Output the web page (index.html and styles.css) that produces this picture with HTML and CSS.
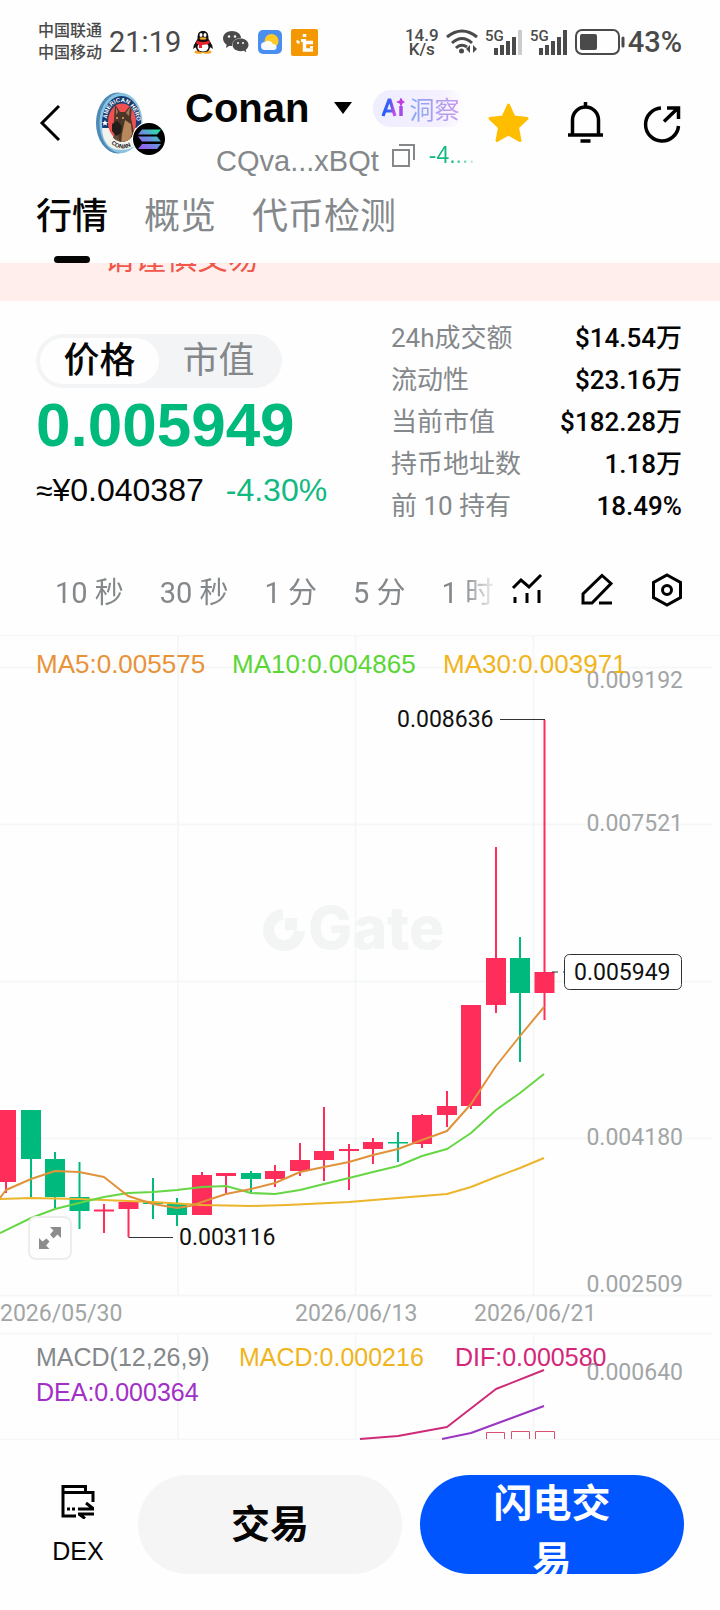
FILE: index.html
```html
<!DOCTYPE html>
<html lang="zh-CN">
<head>
<meta charset="utf-8">
<meta name="viewport" content="width=device-width, initial-scale=1">
<title>Conan 行情</title>
<link rel="stylesheet" href="styles.css">
</head>
<body>
<div class="status-bar">
  <div class="carriers"><span>中国联通</span><span>中国移动</span></div>
  <time class="clock">21:19</time>
  <div class="notices">
    <svg width="22" height="24" viewBox="0 0 22 24" aria-hidden="true">
      <path d="M4 12Q1 15 1 19L4 17M18 12Q21 15 21 19L18 17" fill="#111"/>
      <ellipse cx="7" cy="22" rx="4.500" ry="1.800" fill="#f5a623"/><ellipse cx="15" cy="22" rx="4.500" ry="1.800" fill="#f5a623"/>
      <path d="M5.500 9C5.500 3 7 1 11 1s5.500 2 5.500 8c3 4 3 7 1 10-1 3-3.500 3-6.500 3s-5.500 0-6.500-3c-2-3-2-6 1-10z" fill="#111"/>
      <ellipse cx="11" cy="17" rx="5.500" ry="4.500" fill="#fff"/>
      <path d="M5 10.500q6 3 12 0l1 2.500q-3 2-8 2v3H7v-3l-3-2z" fill="#e8212b"/>
      <ellipse cx="9" cy="5" rx="1.500" ry="2" fill="#fff"/><ellipse cx="13" cy="5" rx="1.500" ry="2" fill="#fff"/>
      <ellipse cx="11" cy="8.500" rx="3.500" ry="1.200" fill="#f5a623"/>
    </svg>
    <svg width="26" height="22" viewBox="0 0 26 22" aria-hidden="true">
      <path d="M9 0c5 0 9 3 9 7-5 0-9 3-9 8l-3 0-3 2 .6-3.200C1.500 12.500 0 10 0 7.500 0 3 4 0 9 0z" fill="#4a4a4a"/>
      <path d="M17.500 7.500c4.500 0 8 2.700 8 6.200 0 2-1 3.700-2.700 5l.5 2.600-2.500-1.500c-7 1.500-11.300-2-11.300-6 0-3.600 3.500-6.300 8-6.300z" fill="#4a4a4a"/>
      <g fill="#fff"><circle cx="6" cy="5.500" r="1.200"/><circle cx="12" cy="5.500" r="1.200"/><circle cx="15" cy="12" r="1"/><circle cx="20" cy="12" r="1"/></g>
    </svg>
    <svg width="24" height="24" viewBox="0 0 24 24" aria-hidden="true">
      <rect width="24" height="24" rx="5" fill="#4a8ff0"/><circle cx="13.500" cy="11" r="7" fill="#ffc926"/>
      <path d="M7 20a4 4 0 0 1 0-8 5 5 0 0 1 8 2 3 3 0 0 1 1 6z" fill="#fff" opacity=".95"/>
    </svg>
    <svg width="27" height="27" viewBox="0 0 27 27" aria-hidden="true">
      <rect width="27" height="27" rx="2" fill="#f39800"/>
      <path d="M13.500 5v3M22 13.500h-8.500V21H22" fill="none" stroke="#fff" stroke-width="3.500"/><path d="M10 10h5v3h-5zM5.500 11l3 1v3l-3-1zM19 17h3v2h-3z" fill="#fff"/>
    </svg>
  </div>
  <div class="speed"><span>14.9</span><span>K/s</span></div>
  <svg width="32" height="26" viewBox="0 0 32 26" aria-hidden="true">
    <g fill="none" stroke="#4a4a4a" stroke-width="3"><path d="M1 8Q16-4 31 8"/><path d="M6 14Q16 5 26 14"/><path d="M10 19q5-5 11-1"/></g>
    <circle cx="15.500" cy="22" r="2.500" fill="#4a4a4a"/><path d="M24 16v8l-4-4zM27 16v8l4-4z" fill="#4a4a4a"/>
  </svg>
  <svg class="signal" width="38" height="26" viewBox="0 0 38 26" role="img" aria-label="5G">
    <text x="0" y="12" class="signal-text">5G</text>
    <path d="M11 19v7M17 16v10M23 12v14M29 8v18" stroke="#4a4a4a" stroke-width="4"/><path d="M35 1v25" stroke="#ccc" stroke-width="4"/>
  </svg>
  <svg class="signal" width="38" height="26" viewBox="0 0 38 26" role="img" aria-label="5G">
    <text x="0" y="12" class="signal-text">5G</text>
    <path d="M11 19v7M17 16v10M23 12v14M29 8v18M35 1v25" stroke="#4a4a4a" stroke-width="4"/>
  </svg>
  <svg width="50" height="26" viewBox="0 0 50 26" aria-hidden="true">
    <rect x="1" y="1" width="43" height="24" rx="6" fill="none" stroke="#4a4a4a" stroke-width="2"/><rect x="5" y="5" width="17" height="16" rx="2" fill="#4a4a4a"/><path d="M48 9v8" stroke="#4a4a4a" stroke-width="3" stroke-linecap="round"/>
  </svg>
  <span class="battery">43%</span>
</div>

<header class="token-header">
  <button class="icon-button" aria-label="返回">
    <svg width="28" height="42" viewBox="0 0 28 42"><path d="M23 4L6 21l17 17" fill="none" stroke="#000" stroke-width="3"/></svg>
  </button>
  <svg class="avatar" width="70" height="64" viewBox="0 0 70 64" role="img" aria-label="Conan">
    <defs>
      <linearGradient id="sol" x1="0" y1="1" x2="1" y2="0"><stop offset="0" stop-color="#a04cf5"/><stop offset=".5" stop-color="#6d8fe0"/><stop offset="1" stop-color="#19f0a0"/></linearGradient>
      <path id="arc-top" d="M11 27C12 16 18 10 25 10s14 6 16 20"/>
      <path id="arc-bottom" d="M13 49Q19 56.500 27 56.500T42 47"/>
      <clipPath id="disc"><ellipse cx="26" cy="31" rx="14" ry="19"/></clipPath>
    </defs>
    <ellipse cx="22" cy="31" rx="22" ry="30.500" fill="#4e8ab5"/>
    <ellipse cx="25" cy="31" rx="21.500" ry="30" fill="#89c3e2"/>
    <ellipse cx="25.500" cy="31" rx="19.500" ry="27" fill="#173a70"/>
    <path d="M6 36q1 22 19.500 22T45 36z" fill="#f3f3ee"/>
    <ellipse cx="26" cy="30" rx="14" ry="18.500" fill="#f05050"/>
    <g clip-path="url(#disc)">
      <path d="M15 50l5-12 14-6 8 18z" fill="#6b4c35"/>
      <path d="M18 28l1-16 5 8h5l7-9-1 15 2 10 3 16H24l-2-11-5-2z" fill="#4a3729"/>
      <path d="M29 28l6 4 1 10-4 10h-7l1-10z" fill="#b8875a"/>
      <path d="M20 15l2 5-2 3zM34 15l-4 6 3 3z" fill="#a77a5c"/>
      <path d="M16 32l5-3 5 5-1 7-5 3-4-5z" fill="#241e1b"/><circle cx="21" cy="26" r="1" fill="#e3a868"/><circle cx="27" cy="26" r="1" fill="#e3a868"/>
    </g>
    <path d="M9 28l1 2h2l-1.500 1.500.5 2-2-1-2 1 .5-2L6 30h2z" fill="#fff"/>
    <text class="coin-text light"><textPath href="#arc-top">AMERICAN HERO</textPath></text>
    <text class="coin-text"><textPath href="#arc-bottom" startOffset="3">CONAN</textPath></text>
    <circle cx="53" cy="47" r="17" fill="#fff"/><circle cx="53" cy="47" r="16" fill="#000"/>
    <path d="M46 37.500h19l-4 5H42zM42 44.500h19l4 5H46zM46 52h19l-4 5H42z" fill="url(#sol)"/>
  </svg>
  <div class="identity">
    <div class="name-row">
      <h1>Conan</h1>
      <svg width="18" height="13" viewBox="0 0 18 13" aria-hidden="true"><path d="M0 0h18L9 12z" fill="#000"/></svg>
      <button class="insight"><svg width="24" height="20" viewBox="0 0 24 20" role="img" aria-label="Ai">
        <defs><linearGradient id="ai"><stop offset="0" stop-color="#1c5eff"/><stop offset=".6" stop-color="#4a60ef"/><stop offset="1" stop-color="#d44be8"/></linearGradient></defs>
        <path d="M2 18L8 2h1l5 16M4 13h8" fill="none" stroke="url(#ai)" stroke-width="3.200"/><path d="M20 8v10" stroke="#a34ae8" stroke-width="3.500"/><path d="M20-1l1.500 3.500L24 4l-2.500 1.500L20 9l-1.500-3.500L15 4l3.500-1.500z" fill="#c23be0"/>
      </svg><span>洞察</span></button>
    </div>
    <div class="address-row">
      <span class="address">CQva...xBQt</span>
      <button class="icon-button" aria-label="复制地址"><svg width="24" height="24" viewBox="0 0 24 24"><path d="M1 7h16v16H1zM7 2h15v15" fill="none" stroke="#84888b" stroke-width="2"/></svg></button>
      <span class="mini-change">-4....</span>
    </div>
  </div>
  <div class="actions">
    <button class="icon-button" aria-label="收藏"><svg width="42" height="42" viewBox="0 0 42 42"><path d="M20.500 3l5.500 12 13 1.500-9.500 9L32 38.500 20.500 32 9 38.500l2.500-13L2 16.500 15 15z" fill="#ffbd00" stroke="#ffbd00" stroke-width="3" stroke-linejoin="round"/></svg></button>
    <button class="icon-button" aria-label="提醒"><svg width="42" height="42" viewBox="0 0 42 42" fill="none" stroke="#000" stroke-width="3.500"><path d="M3 33h35M7.500 33V18a13 13 0 0 1 26 0v15M20.500 6V0M15.500 39h10"/></svg></button>
    <button class="icon-button" aria-label="分享"><svg width="42" height="42" viewBox="0 0 42 42" fill="none" stroke="#000" stroke-width="3.500"><path d="M19 6A16.500 16.500 0 1 0 36.500 24M22 19.500L36 6M25 6h11.500v11"/></svg></button>
  </div>
</header>

<nav class="tabs">
  <a href="#market" class="active" aria-current="page">行情</a>
  <a href="#overview">概览</a>
  <a href="#security">代币检测</a>
</nav>

<main id="market">
  <div class="warning"><p>请谨慎交易</p></div>

  <section class="summary">
    <div class="quote">
      <div class="switch"><button class="selected" aria-pressed="true">价格</button><button aria-pressed="false">市值</button></div>
      <strong class="price">0.005949</strong>
      <p class="converted"><span><span class="approx">≈</span>¥0.040387</span><span class="up">-4.30%</span></p>
    </div>
    <dl class="stats">
      <div><dt>24h成交额</dt><dd>$14.54万</dd></div>
      <div><dt>流动性</dt><dd>$23.16万</dd></div>
      <div><dt>当前市值</dt><dd>$182.28万</dd></div>
      <div><dt>持币地址数</dt><dd>1.18万</dd></div>
      <div><dt>前 10 持有</dt><dd>18.49%</dd></div>
    </dl>
  </section>

  <div class="toolbar">
    <div class="intervals">
      <button>10 秒</button><button>30 秒</button><button>1 分</button><button>5 分</button><button>1 时</button>
    </div>
    <div class="tools">
      <button class="icon-button" aria-label="指标"><svg width="34" height="34" viewBox="0 0 34 34" fill="none" stroke="#000" stroke-width="3"><path d="M3 15l8-8 8 7L31 2M5 24v6M17 20v10M29 17v13"/></svg></button>
      <button class="icon-button" aria-label="画线"><svg width="34" height="34" viewBox="0 0 34 34" fill="none" stroke="#000" stroke-width="3"><path d="M3 30v-9L22 2.500l9 8L12 30zM19 30h13"/></svg></button>
      <button class="icon-button" aria-label="设置"><svg width="34" height="34" viewBox="0 0 34 34" fill="none" stroke="#000" stroke-width="3"><path d="M17 2l13.500 7.500v15L17 32 3.500 24.500v-15z"/><circle cx="17" cy="17" r="4.500"/></svg></button>
    </div>
  </div>

  <div class="chart-wrap">
    <svg class="chart" viewBox="0 635 720 805" role="img" aria-label="K 线图">
      <g class="grid"><path d="M0 635.500H720M0 667.500H712M0 824.500H712M0 981.500H712M0 1138.500H712M0 1295.500H712M0 1333.500H712M0 1439.500H720M178 635V1295M355.500 635V1295M533.500 635V1295M178 1333V1440M355.500 1333V1440M533.500 1333V1440"/></g>
      <g class="watermark">
        <path d="M283 914.500A15.500 15.500 0 1 0 299.500 931" class="mark-ring"/><path d="M285 918h12v12h-12z" class="mark-dot"/>
        <text x="308" y="949">Gate</text>
      </g>
      <g class="wick red"><path d="M6 1182V1193M104 1204V1233M128.500 1209V1237M202 1172V1215M226 1176V1193M275 1165V1187M300 1143V1176M324 1107V1181M349 1144V1190M373 1138V1164M422 1114V1148M447 1091V1127M471 1105V1109M496 847V1013M544.500 720V1020"/></g>
      <g class="wick green"><path d="M31 1159V1197M55 1152V1208M79.500 1162V1229M153 1178V1219M177 1198V1226M251 1171V1194M398 1132V1162M520 937V1062"/></g>
      <g class="body red">
        <path d="M6 1110V1182M104 1209.500V1211.500M128.500 1202V1209M202 1175V1215M226 1173V1176M275 1171V1179M300 1160V1171M324 1151V1160M349 1149V1151M373 1142V1149M422 1115V1144M447 1106V1115M471 1005V1106M496 958V1005M544.500 972V993"/>
      </g>
      <g class="body green"><path d="M31 1110V1159M55 1159V1197M79.500 1197V1211M153 1202.500V1204M177 1204V1215M251 1173V1179M398 1142V1143.500M520 958V993"/></g>
      <polyline class="line ma30" points="0,1199 31,1198 79,1199 128,1201 153,1202 202,1205 251,1206 287,1205 349,1202 398,1198 447,1194 471,1187 496,1177 520,1168 544,1158"/>
      <polyline class="line ma10" points="0,1233 31,1218 55,1209 79,1203 104,1197 128,1193 153,1192 177,1190 202,1187 226,1186 251,1193 275,1194 300,1190 324,1184 349,1178 373,1172 398,1166 422,1156 447,1149 471,1133 496,1110 520,1093 544,1074"/>
      <polyline class="line ma5" points="0,1198 6,1190 31,1179 55,1171 79,1172 104,1177 128,1196 153,1204 177,1208 190,1206 226,1194 251,1189 275,1183 300,1172 324,1167 349,1162 373,1155 398,1149 422,1140 447,1131 471,1104 496,1066 520,1036 544,1007"/>
      <path class="pointer" d="M500 719.500H545M128.500 1237.500H173"/><path class="pointer" stroke-dasharray="6 5" d="M552 972H565"/>
      <text class="num" x="397" y="727">0.008636</text>
      <text class="num" x="179" y="1245">0.003116</text>
      <rect class="tag" x="564.500" y="954.500" width="117" height="35" rx="5"/>
      <text class="num" x="574" y="980">0.005949</text>
      <g class="num axis"><text x="683" y="688" text-anchor="end">0.009192</text><text x="683" y="831" text-anchor="end">0.007521</text><text x="683" y="1145" text-anchor="end">0.004180</text><text x="683" y="1292" text-anchor="end">0.002509</text>
      <text x="0" y="1321">2026/05/30</text><text x="295" y="1321">2026/06/13</text><text x="474" y="1321">2026/06/21</text>
      <text x="683" y="1380" text-anchor="end">0.000640</text></g>
      <g class="legend"><text x="36" y="673" class="t-ma5">MA5:0.005575</text><text x="232" y="673" class="t-ma10">MA10:0.004865</text><text x="443" y="673" class="t-ma30">MA30:0.003971</text></g>
      <g class="legend macd"><text x="36" y="1366" class="t-gray">MACD(12,26,9)</text><text x="239" y="1366" class="t-ma30">MACD:0.000216</text><text x="455" y="1366" class="t-dif">DIF:0.000580</text><text x="36" y="1401" class="t-dea">DEA:0.000364</text></g>
      <polyline class="line dif" points="360,1439 398,1436 447,1427 496,1389 544,1370"/>
      <polyline class="line dea" points="442,1439 471,1433 544,1406"/>
      <path class="histogram" d="M486.500 1439V1432.500H504.500V1439M511.500 1439V1431.500H529.500V1439M535.500 1439V1431.500H554.500V1439"/>
    </svg>
    <button class="expand" aria-label="全屏"><svg width="24" height="24" viewBox="0 0 24 24"><path d="M12 1h11v11l-3.500-3.500-4 4-3.500-4 3.500-4zM1 12l3.500 3.500 4-3 3 3-3.500 4 3.500 3.500H1z" fill="#8c8c8c"/></svg></button>
  </div>
</main>

<footer class="trade-bar">
  <a href="#dex" class="dex"><svg width="34" height="34" viewBox="0 0 34 34" fill="none" stroke="#000" stroke-width="3" aria-hidden="true"><path d="M15 31H2V1.500H24.500V7.500M2 7.500H32V17M6 24h3M11 24h3M17 24H33M25 18l7 5.500M33 29H17M18 29l6 4.500"/></svg><span>DEX</span></a>
  <button class="trade">交易</button>
  <button class="trade flash">闪电交易</button>
</footer>
</body>
</html>
```
FILE: styles.css
```css
* { box-sizing: border-box; }
body {
  margin: 0;
  background: #fefefe;
  color: #050505;
  font-family: "Liberation Sans", "Noto Sans CJK SC", sans-serif;
}
button {
  margin: 0;
  padding: 0;
  border: 0;
  background: none;
  color: inherit;
  font: inherit;
  cursor: pointer;
}
a { color: inherit; text-decoration: none; }
h1, p, dl, dd { margin: 0; }
svg { display: block; flex: none; }
.icon-button { display: block; flex: none; }

/* Status bar */
.status-bar {
  display: flex;
  align-items: center;
  gap: 7px;
  padding: 20px 38px 0;
  color: #4a4a4a;
  font-family: Roboto, "Noto Sans CJK SC", sans-serif;
}
.carriers { display: flex; flex-direction: column; font-size: 16px; line-height: 22px; font-weight: 500; }
.clock { font-size: 29px; line-height: 32px; }
.notices { display: flex; align-items: center; gap: 9px; margin: 0 auto 0 4px; }
.speed { display: flex; flex-direction: column; align-items: center; font-size: 17px; line-height: 14px; font-weight: 500; }
.signal { overflow: visible; }
.signal-text { font: 500 15px Roboto, sans-serif; fill: #4a4a4a; }
.battery { margin-left: -4px; font-size: 29px; line-height: 32px; font-weight: 500; }

/* Token header */
.token-header { display: flex; align-items: flex-start; padding: 23px 36px 0 36px; }
.token-header > .icon-button { margin-top: 15px; }
.avatar { margin: 5px 19px 0 32px; }
.coin-text { font: 700 6px "Liberation Sans", sans-serif; fill: #222; }
.coin-text.light { fill: #fff; }
.identity { flex: 1; min-width: 0; }
.name-row { display: flex; align-items: center; height: 42px; }
.name-row > svg { margin: 0 21px 0 25px; }
h1 { font-size: 40px; line-height: 42px; font-weight: 700; }
.insight {
  display: flex;
  align-items: center;
  gap: 4px;
  height: 37px;
  padding: 0 8px;
  border-radius: 18px;
  background: linear-gradient(90deg, #eeeeff, #f5efff 70%, #fefefe);
  font-size: 25px;
}
.insight span {
  background: linear-gradient(90deg, #83a8f5, #c898ee);
  -webkit-background-clip: text;
  background-clip: text;
  color: transparent;
}
.address-row { display: flex; align-items: flex-start; gap: 13px; margin: 14px 0 0 31px; line-height: 24px; }
.address { color: #84888b; font-size: 29px; line-height: 36px; }
.mini-change {
  font-size: 23px;
  background: linear-gradient(90deg, #12b981 50%, #d5f3e8);
  -webkit-background-clip: text;
  background-clip: text;
  color: transparent;
}
.actions { display: flex; gap: 35px; margin-top: 15px; }

/* Section tabs */
.tabs { display: flex; gap: 36px; padding: 13px 36px 0; font-size: 36px; line-height: 50px; color: #84888b; }
.tabs .active { color: #050505; font-weight: 500; }
.tabs .active::after {
  content: "";
  display: block;
  width: 36px;
  height: 7px;
  margin: 14px auto 0;
  border-radius: 4px;
  background: #050505;
}

.warning { overflow: hidden; padding: 0 104px 27px; background: #ffeeec; color: #f0564a; font-size: 31px; line-height: 30px; }
.warning p { margin-top: -19px; }

/* Price summary */
.summary { display: flex; justify-content: space-between; padding: 16px 38px 0 36px; }
.quote { padding-top: 17px; }
.switch { display: inline-flex; padding: 4px; border-radius: 27px; background: #f2f4f5; color: #84888b; font-size: 36px; }
.switch button { width: 119px; height: 46px; border-radius: 23px; line-height: 46px; }
.switch .selected { background: #fefefe; color: #050505; font-weight: 500; }
.price { display: block; color: #00b97c; font-size: 62px; line-height: 74px; }
.converted { display: flex; gap: 22px; margin-top: 8px; font-size: 32px; line-height: 40px; }
.up { color: #12b981; }
.approx { font-size: 30px; }
.stats { width: 291px; font-family: Roboto, "Noto Sans CJK SC", sans-serif; font-size: 26px; line-height: 42px; }
.stats div { display: flex; justify-content: space-between; }
.stats dt { color: #84888b; }
.stats dd { font-weight: 500; }

/* Chart toolbar */
.toolbar {
  display: flex;
  align-items: center;
  justify-content: space-between;
  height: 90px;
  margin-top: 18px;
  padding: 0 36px 0 55px;
}
.intervals {
  display: flex;
  flex: 1;
  gap: 36px;
  min-width: 0;
  overflow: hidden;
  color: #84888b;
  font-family: Roboto, "Noto Sans CJK SC", sans-serif;
  font-size: 29px;
  white-space: nowrap;
  -webkit-mask-image: linear-gradient(90deg, #000 92%, transparent);
  mask-image: linear-gradient(90deg, #000 92%, transparent);
}
.intervals button { flex: none; }
.tools { display: flex; gap: 36px; margin-left: 12px; }

/* Chart */
.chart-wrap { position: relative; }
.chart { width: 100%; height: auto; }
.grid path { stroke: #f5f7f7; stroke-width: 2; }
.watermark text { font: 800 59px Inter, sans-serif; fill: #f3f5f5; }
.mark-ring { fill: none; stroke: #f3f5f5; stroke-width: 11; }
.mark-dot { fill: #f3f5f5; }
.wick { stroke-width: 2; }
.body { stroke-width: 20; }
.red { stroke: #ff2d5a; }
.green { stroke: #00b97c; }
.line { fill: none; stroke-width: 2; stroke-linejoin: round; }
.ma5 { stroke: #e0923a; }
.ma10 { stroke: #67d644; }
.ma30 { stroke: #ebb52c; }
.dif { stroke: #cf2a78; }
.dea { stroke: #9a35c4; }
.histogram { fill: none; stroke: #d9506f; stroke-width: 1; }
.pointer { fill: none; stroke: #333; stroke-width: 1; }
.tag { fill: #fff; stroke: #333; stroke-width: 1; }
.num { font: 23px Roboto, sans-serif; fill: #111; }
.axis { fill: #a2a5a6; }
.legend { font-size: 26px; }
.legend.macd { font-size: 25px; }
.t-ma5 { fill: #e8923a; }
.t-ma10 { fill: #5bd636; }
.t-ma30 { fill: #f0b41c; }
.t-gray { fill: #84888b; }
.t-dif { fill: #d4267a; }
.t-dea { fill: #a22fc6; }
.expand {
  position: absolute;
  left: 28px;
  bottom: 180px;
  display: grid;
  place-items: center;
  width: 44px;
  height: 44px;
  border: 2px solid #ededed;
  border-radius: 8px;
  background: #fefefe;
}

/* Bottom trade bar */
.trade-bar { display: flex; gap: 18px; padding: 35px 36px 36px; }
.dex { display: flex; flex-direction: column; align-items: center; gap: 17px; width: 84px; padding-top: 10px; font-size: 25px; line-height: 30px; }
.trade {
  flex: 1 1 0;
  min-width: 0;
  height: 99px;
  padding: 0 70px;
  border-radius: 50px;
  background: #f5f5f5;
  font-size: 39px;
  line-height: 57px;
  font-weight: 700;
}
.flash {
  display: flex;
  align-items: flex-start;
  justify-content: center;
  overflow: hidden;
  background: #0055ff;
  color: #fff;
}
```
